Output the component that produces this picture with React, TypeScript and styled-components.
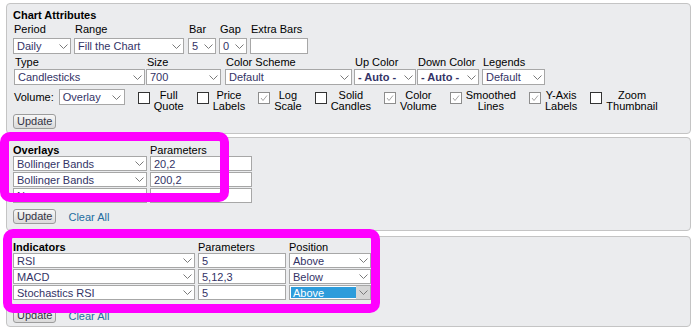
import React from "react";
import styled, { createGlobalStyle } from "styled-components";

const GlobalStyle = createGlobalStyle`
  body {
    margin: 0;
    background: #fff;
    font-family: "Liberation Sans", Arial, sans-serif;
    font-size: 11px;
    color: #000;
  }
`;

const Page = styled.div`
  position: relative;
  display: flex;
  flex-direction: column;
  padding: 3px 1px 0 6px;
`;

const Panel = styled.section<{ $mt?: number; $pt: number; $pb: number }>`
  margin-top: ${(p) => p.$mt ?? 0}px;
  padding: ${(p) => p.$pt}px 6px ${(p) => p.$pb}px;
  background: #ebecee;
  border: 1px solid #c4c4c4;
  border-radius: 4px;
`;

const Title = styled.div`
  font-weight: bold;
  line-height: 14px;
`;

const FieldRow = styled.div<{ $mt?: number; $ml?: number }>`
  display: flex;
  margin-top: ${(p) => p.$mt ?? 0}px;
  margin-left: ${(p) => p.$ml ?? 0}px;
`;

const Field = styled.div<{ $ml?: number; $gap: number }>`
  display: flex;
  flex-direction: column;
  margin-left: ${(p) => p.$ml ?? 0}px;
  gap: ${(p) => p.$gap}px;
`;

const FieldLabel = styled.span`
  line-height: 14px;
  padding-left: 1px;
  white-space: nowrap;
`;

const SelectBox = styled.div<{ $w: number; $h: number }>`
  display: flex;
  box-sizing: border-box;
  width: ${(p) => p.$w}px;
  height: ${(p) => p.$h}px;
  background: #fff;
  border: 1px solid #a7a7a7;
  color: #333366;
  line-height: 14px;
`;

const SelectValue = styled.span<{ $active?: boolean; $bold?: boolean }>`
  flex: 1;
  display: flex;
  align-items: center;
  min-width: 0;
  margin: 1px 0 1px 1px;
  padding-left: 2px;
  white-space: nowrap;
  overflow: hidden;
  font-weight: ${(p) => (p.$bold ? "bold" : "normal")};
  background: ${(p) => (p.$active ? "#2d9cdb" : "transparent")};
  color: ${(p) => (p.$active ? "#fff" : "inherit")};
`;

const Arrow = styled.span<{ $active?: boolean }>`
  width: 14px;
  flex: none;
  display: flex;
  align-items: center;
  justify-content: center;
  background: ${(p) => (p.$active ? "#d6d6d6" : "transparent")};
`;

const TextBox = styled.input<{ $w: number; $h: number }>`
  box-sizing: border-box;
  width: ${(p) => p.$w}px;
  height: ${(p) => p.$h}px;
  margin: 0;
  padding: 0 0 0 3px;
  border: 1px solid #a7a7a7;
  background: #fff;
  color: #333366;
  font: inherit;
  line-height: 14px;
  outline: none;
`;

const OptionsRow = styled.div`
  display: flex;
  align-items: flex-start;
  margin: 3px 0 0 1px;
  height: 22px;
`;

const VolumeLabel = styled.span`
  margin: 1px 5px 0 0;
  line-height: 16px;
`;

const VolumeSelect = styled.div`
  margin-top: 1px;
`;

const CheckItem = styled.label`
  display: flex;
  align-items: flex-start;
  margin: 2px 0 0 13px;
`;

const CheckText = styled.span`
  margin-left: 4px;
  line-height: 11px;
  text-align: center;
`;

const CheckSvg = styled.svg`
  margin-top: 2px;
  flex: none;
`;

const ButtonRow = styled.div<{ $mt: number }>`
  display: flex;
  align-items: center;
  margin-top: ${(p) => p.$mt}px;
`;

const Button = styled.button`
  box-sizing: border-box;
  height: 15px;
  margin: 0;
  padding: 0 3px;
  font: inherit;
  line-height: 13px;
  color: #333344;
  background: linear-gradient(#f7f7f7, #dadada);
  border: 1px solid #9c9c9c;
  border-radius: 3px;
`;

const ClearLink = styled.a`
  margin-left: 12px;
  color: #246c9f;
  text-decoration: none;
  line-height: 14px;
`;

const Grid = styled.div<{ $cols: string }>`
  display: grid;
  grid-template-columns: ${(p) => p.$cols};
  column-gap: 3px;
  row-gap: 1px;
`;

const HeadCell = styled.span<{ $bold?: boolean }>`
  line-height: 12px;
  margin-bottom: -1px;
  font-weight: ${(p) => (p.$bold ? "bold" : "normal")};
  white-space: nowrap;
`;

const Highlight = styled.div<{ $x: number; $y: number; $w: number; $h: number }>`
  position: absolute;
  left: ${(p) => p.$x}px;
  top: ${(p) => p.$y}px;
  width: ${(p) => p.$w}px;
  height: ${(p) => p.$h}px;
  box-sizing: border-box;
  border: 9px solid #ff00ff;
  border-radius: 10px;
  pointer-events: none;
`;

const Chevron = () => (
  <svg width="9" height="5" viewBox="0 0 9 5">
    <polyline points="0.5,0.5 4.5,4.5 8.5,0.5" fill="none" stroke="#7a7a7a" strokeWidth="1" />
  </svg>
);

type SelectProps = { w: number; h?: number; value: string; active?: boolean; bold?: boolean };

const Select = ({ w, h = 16, value, active, bold }: SelectProps) => (
  <SelectBox $w={w} $h={h}>
    <SelectValue $active={active} $bold={bold}>{value}</SelectValue>
    <Arrow $active={active}>
      <Chevron />
    </Arrow>
  </SelectBox>
);

const Check = ({ label, checked }: { label: string; checked?: boolean }) => {
  const [a, b] = label.split(" ");
  return (
    <CheckItem>
      <CheckSvg width="12" height="12" viewBox="0 0 12 12">
        <rect x="0.5" y="0.5" width="11" height="11" fill="#fff" stroke={checked ? "#8d8d8d" : "#333"} />
        {checked && <polyline points="3,6 5,8.5 9,3.5" fill="none" stroke="#9a9a9a" strokeWidth="0.9" />}
      </CheckSvg>
      <CheckText>
        {a}
        <br />
        {b}
      </CheckText>
    </CheckItem>
  );
};

const checks: [string, boolean][] = [
  ["Full Quote", false],
  ["Price Labels", false],
  ["Log Scale", true],
  ["Solid Candles", false],
  ["Color Volume", true],
  ["Smoothed Lines", true],
  ["Y-Axis Labels", true],
  ["Zoom Thumbnail", false],
];

const overlays = [
  { name: "Bollinger Bands", params: "20,2" },
  { name: "Bollinger Bands", params: "200,2" },
  { name: "None", params: "" },
];

const indicators = [
  { name: "RSI", params: "5", pos: "Above" },
  { name: "MACD", params: "5,12,3", pos: "Below" },
  { name: "Stochastics RSI", params: "5", pos: "Above", active: true },
];

export default function App() {
  return (
    <Page>
      <GlobalStyle />
      <Panel $pt={4} $pb={4}>
        <Title>Chart Attributes</Title>
        <FieldRow>
          <Field $gap={2}>
            <FieldLabel>Period</FieldLabel>
            <Select w={58} value="Daily" />
          </Field>
          <Field $gap={2} $ml={3}>
            <FieldLabel>Range</FieldLabel>
            <Select w={110} value="Fill the Chart" />
          </Field>
          <Field $gap={2} $ml={4}>
            <FieldLabel>Bar</FieldLabel>
            <Select w={28} value="5" />
          </Field>
          <Field $gap={2} $ml={3}>
            <FieldLabel>Gap</FieldLabel>
            <Select w={28} value="0" />
          </Field>
          <Field $gap={2} $ml={3}>
            <FieldLabel>Extra Bars</FieldLabel>
            <TextBox $w={58} $h={16} defaultValue="" />
          </Field>
        </FieldRow>
        <FieldRow $mt={1} $ml={1}>
          <Field $gap={0}>
            <FieldLabel>Type</FieldLabel>
            <Select w={131} value="Candlesticks" />
          </Field>
          <Field $gap={0} $ml={1}>
            <FieldLabel>Size</FieldLabel>
            <Select w={75} value="700" />
          </Field>
          <Field $gap={0} $ml={4}>
            <FieldLabel>Color Scheme</FieldLabel>
            <Select w={127} value="Default" />
          </Field>
          <Field $gap={0} $ml={2}>
            <FieldLabel>Up Color</FieldLabel>
            <Select w={62} value="- Auto -" bold />
          </Field>
          <Field $gap={0} $ml={1}>
            <FieldLabel>Down Color</FieldLabel>
            <Select w={62} value="- Auto -" bold />
          </Field>
          <Field $gap={0} $ml={3}>
            <FieldLabel>Legends</FieldLabel>
            <Select w={63} value="Default" />
          </Field>
        </FieldRow>
        <OptionsRow>
          <VolumeLabel>Volume:</VolumeLabel>
          <VolumeSelect>
            <Select w={66} value="Overlay" />
          </VolumeSelect>
          {checks.map(([label, checked]) => (
            <Check key={label} label={label} checked={checked} />
          ))}
        </OptionsRow>
        <ButtonRow $mt={4}>
          <Button>Update</Button>
        </ButtonRow>
      </Panel>

      <Panel $mt={3} $pt={6} $pb={6}>
        <Grid $cols="134px 102px">
          <HeadCell $bold>Overlays</HeadCell>
          <HeadCell>Parameters</HeadCell>
          {overlays.map((o, i) => (
            <React.Fragment key={i}>
              <Select w={134} h={15} value={o.name} />
              <TextBox $w={102} $h={15} defaultValue={o.params} />
            </React.Fragment>
          ))}
        </Grid>
        <ButtonRow $mt={6}>
          <Button>Update</Button>
          <ClearLink href="#">Clear All</ClearLink>
        </ButtonRow>
      </Panel>

      <Panel $mt={5} $pt={4} $pb={3}>
        <Grid $cols="182px 88px 82px">
          <HeadCell $bold>Indicators</HeadCell>
          <HeadCell>Parameters</HeadCell>
          <HeadCell>Position</HeadCell>
          {indicators.map((ind, i) => (
            <React.Fragment key={i}>
              <Select w={182} h={15} value={ind.name} />
              <TextBox $w={88} $h={15} defaultValue={ind.params} />
              <Select w={82} h={15} value={ind.pos} active={ind.active} />
            </React.Fragment>
          ))}
        </Grid>
        <ButtonRow $mt={8}>
          <Button>Update</Button>
          <ClearLink href="#">Clear All</ClearLink>
        </ButtonRow>
      </Panel>

      <Highlight $x={0} $y={132} $w={229} $h={70} />
      <Highlight $x={3} $y={229} $w={377} $h={84} />
    </Page>
  );
}
